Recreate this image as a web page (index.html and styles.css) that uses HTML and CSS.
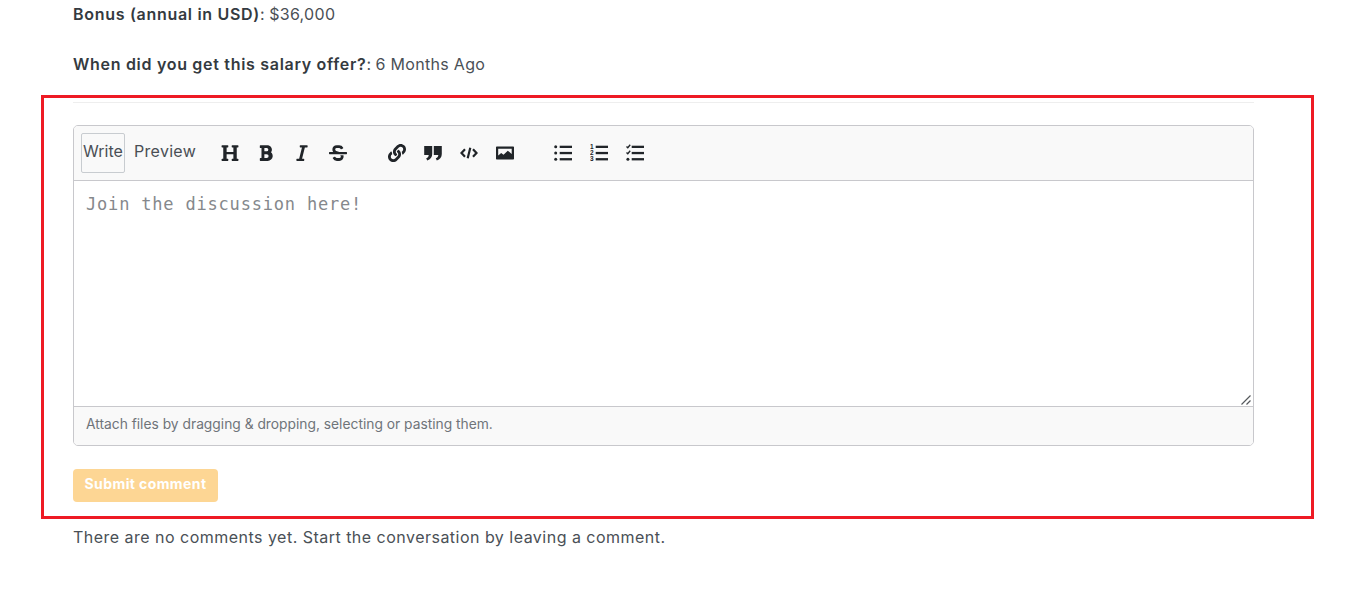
FILE: index.html
```html
<!DOCTYPE html>
<html lang="en">
<head>
<meta charset="utf-8">
<title>Salary offer comments</title>
<link rel="stylesheet" href="styles.css">
</head>
<body>
<main class="page">
  <p class="fact"><strong>Bonus (annual in USD)</strong>: <span class="value">$36,000</span></p>
  <p class="fact"><strong>When did you get this salary offer?</strong>: <span class="value">6 Months Ago</span></p>
  <hr class="rule">
  <form class="comment-form">
    <div class="editor">
      <div class="toolbar">
        <div class="tabs">
          <button type="button" class="tab active">Write</button>
          <button type="button" class="tab">Preview</button>
        </div>
        <div class="tools tools-text">
          <svg class="ico" viewBox="0 0 512 512"><path d="M448 96v320h32a16 16 0 0 1 16 16v32a16 16 0 0 1-16 16H320a16 16 0 0 1-16-16v-32a16 16 0 0 1 16-16h32V288H160v128h32a16 16 0 0 1 16 16v32a16 16 0 0 1-16 16H32a16 16 0 0 1-16-16v-32a16 16 0 0 1 16-16h32V96H32a16 16 0 0 1-16-16V48a16 16 0 0 1 16-16h160a16 16 0 0 1 16 16v32a16 16 0 0 1-16 16h-32v128h192V96h-32a16 16 0 0 1-16-16V48a16 16 0 0 1 16-16h160a16 16 0 0 1 16 16v32a16 16 0 0 1-16 16z"/></svg>
          <svg class="ico" viewBox="0 0 384 512"><path d="M333.49 238a122 122 0 0 0 27-65.21C367.87 96.49 306.55 32 230.41 32H32a16 16 0 0 0-16 16v48a16 16 0 0 0 16 16h31.87v288H32a16 16 0 0 0-16 16v48a16 16 0 0 0 16 16h209.32c70.8 0 134.14-51.75 141-122.4 4.74-48.45-16.39-92.06-48.83-119.6zM145.66 112h64.75a48 48 0 0 1 0 96h-64.75zm64.75 288h-64.75V288h64.75a56 56 0 0 1 0 112z"/></svg>
          <svg class="ico" viewBox="0 0 320 512"><path d="M320 48v32a16 16 0 0 1-16 16h-62.76l-80 320H208a16 16 0 0 1 16 16v32a16 16 0 0 1-16 16H16a16 16 0 0 1-16-16v-32a16 16 0 0 1 16-16h62.76l80-320H112a16 16 0 0 1-16-16V48a16 16 0 0 1 16-16h192a16 16 0 0 1 16 16z"/></svg>
          <svg class="ico" viewBox="0 0 512 512"><path d="M496 224H293.900l-87.170-26.830A43.550 43.550 0 0 1 219.550 112h66.790A49.890 49.890 0 0 1 331 139.580a16 16 0 0 0 21.460 7.150l42.940-21.470a16 16 0 0 0 7.160-21.460l-.53-1A128 128 0 0 0 287.510 32h-68a123.680 123.680 0 0 0-123 135.640c2 20.890 10.100 39.830 21.780 56.360H16a16 16 0 0 0-16 16v32a16 16 0 0 0 16 16h480a16 16 0 0 0 16-16v-32a16 16 0 0 0-16-16zm-180.240 96A43 43 0 0 1 336 356.450 43.590 43.590 0 0 1 292.450 400h-66.790A49.890 49.890 0 0 1 181 372.420a16 16 0 0 0-21.460-7.150l-42.940 21.470a16 16 0 0 0-7.160 21.460l.53 1A128 128 0 0 0 224.490 480h68a123.680 123.680 0 0 0 123-135.640 114.250 114.250 0 0 0-5.340-24.360z"/></svg>
        </div>
        <div class="tools tools-insert">
          <svg class="ico" viewBox="0 0 512 512"><path d="M326.612 185.391c59.747 59.809 58.927 155.698.36 214.590-.11.120-.24.250-.36.370l-67.200 67.200c-59.270 59.270-155.699 59.262-214.960 0-59.270-59.260-59.270-155.700 0-214.960l37.106-37.106c9.840-9.840 26.786-3.300 27.294 10.606.648 17.722 3.826 35.527 9.690 52.721 1.986 5.822.567 12.262-3.783 16.612l-13.087 13.087c-28.026 28.026-28.905 73.660-1.155 101.960 28.024 28.579 74.086 28.749 102.325.510l67.200-67.190c28.191-28.191 28.073-73.757 0-101.830-3.701-3.694-7.429-6.564-10.341-8.569a16.037 16.037 0 0 1-6.947-12.606c-.396-10.567 3.348-21.456 11.698-29.806l21.054-21.055c5.521-5.521 14.182-6.199 20.584-1.731a152.482 152.482 0 0 1 20.522 17.197zM467.547 44.449c-59.261-59.262-155.690-59.270-214.960 0l-67.200 67.200c-.120.120-.250.250-.360.370-58.566 58.892-59.387 154.781.360 214.590a152.454 152.454 0 0 0 20.521 17.196c6.402 4.468 15.064 3.789 20.584-1.731l21.054-21.055c8.350-8.350 12.094-19.239 11.698-29.806a16.037 16.037 0 0 0-6.947-12.606c-2.912-2.005-6.640-4.875-10.341-8.569-28.073-28.073-28.191-73.639 0-101.830l67.200-67.190c28.239-28.239 74.300-28.069 102.325.510 27.750 28.300 26.872 73.934-1.155 101.960l-13.087 13.087c-4.350 4.350-5.769 10.790-3.783 16.612 5.864 17.194 9.042 34.999 9.690 52.721.509 13.906 17.454 20.446 27.294 10.606l37.106-37.106c59.271-59.259 59.271-155.699.001-214.959z"/></svg>
          <svg class="ico" viewBox="0 0 18 18"><path d="M.2 2h8v8c0 3.300-1.800 5.400-5 6.500l-1-2.200c1.700-.7 2.500-1.800 2.500-3.300H.2zM9.800 2h8v8c0 3.300-1.800 5.400-5 6.500l-1-2.200c1.700-.7 2.500-1.800 2.500-3.300H9.800z"/></svg>
          <svg class="ico" viewBox="0 0 18 18"><path class="line line-code" d="M5 5.200 1.500 9 5 12.800M13 5.200 16.500 9 13 12.800M10.300 3.800 7.700 14.200"/></svg>
          <svg class="ico" viewBox="0 0 18 18"><path fill-rule="evenodd" d="M1 2.500h16c.6 0 1 .4 1 1v11c0 .6-.4 1-1 1H1c-.6 0-1-.4-1-1v-11c0-.6.4-1 1-1zM2.200 4.700v6.800l3-2.500 2.300 1.700 4.300-4 3.900 3.200V4.700z"/></svg>
        </div>
        <div class="tools tools-list">
          <svg class="ico" viewBox="0 0 18 18"><circle cx="1.700" cy="2.800" r="1.500"/><circle cx="1.700" cy="9" r="1.500"/><circle cx="1.700" cy="15.200" r="1.500"/><rect x="5.700" y="1.700" width="12.300" height="2.300"/><rect x="5.700" y="7.900" width="12.300" height="2.300"/><rect x="5.700" y="14.100" width="12.300" height="2.300"/></svg>
          <svg class="ico" viewBox="0 0 18 18"><text class="num" x="0" y="4.800">1</text><text class="num" x="0" y="11">2</text><text class="num" x="0" y="17.200">3</text><rect x="5.700" y="1.700" width="12.300" height="2.300"/><rect x="5.700" y="7.900" width="12.300" height="2.300"/><rect x="5.700" y="14.100" width="12.300" height="2.300"/></svg>
          <svg class="ico" viewBox="0 0 18 18"><path class="line line-check" d="M.5 2.400 1.800 3.700 4.200.8M.5 8.400 1.800 9.700 4.200 6.800"/><circle cx="1.900" cy="15.200" r="1.500"/><rect x="5.700" y="1.700" width="12.300" height="2.300"/><rect x="5.700" y="7.900" width="12.300" height="2.300"/><rect x="5.700" y="14.100" width="12.300" height="2.300"/></svg>
        </div>
      </div>
      <div class="input-wrap">
        <textarea class="input" placeholder="Join the discussion here!"></textarea>
        <svg class="grip" viewBox="0 0 10 10"><path d="M.5 9.500 9.500.5M5.500 9.500 9.500 5.500"/></svg>
      </div>
      <div class="attach">Attach files by dragging &amp; dropping, selecting or pasting them.</div>
    </div>
    <button type="button" class="submit">Submit comment</button>
  </form>
  <p class="empty">There are no comments yet. Start the conversation by leaving a comment.</p>
  <div class="highlight"></div>
</main>
</body>
</html>
```

FILE: styles.css
```css
* { box-sizing: border-box; }
html, body { margin: 0; padding: 0; background: #fff; }
body {
  height: 590px;
  overflow: hidden;
  font-family: Inter, "Noto Sans", "Liberation Sans", sans-serif;
  font-size: 16px;
  line-height: 24px;
  color: #4a5056;
}
.page {
  position: relative;
  height: 590px;
  padding: 2px 110px 0 73px;
}
.fact { margin: 0 0 26px; }
.fact strong { font-weight: 600; color: #343a40; letter-spacing: 0.7px; }
.value { letter-spacing: 0.3px; }
.rule {
  height: 1px;
  margin: 0 0 22px;
  border: 0;
  background: #eeeeee;
}
.editor {
  border: 1px solid #c8c8cc;
  border-radius: 5px;
  overflow: hidden;
  display: flex;
  flex-direction: column;
}
.toolbar {
  height: 55px;
  padding: 7px;
  display: flex;
  align-items: flex-start;
  background: #f9f9f9;
  border-bottom: 1px solid #c8c8cc;
}
.tabs { display: flex; width: 140px; flex: none; }
.tab {
  height: 40px;
  padding: 0 8px 4px 8px;
  font: inherit;
  letter-spacing: 0.3px;
  color: #4a4f55;
  background: transparent;
  border: 1px solid transparent;
  border-radius: 2px;
}
.tab.active { width: 44px; flex: none; padding: 0 0 4px; border-color: #c8ccd0; letter-spacing: 0; }
.tools { display: flex; align-items: center; height: 40px; gap: 18px; }
.ico { width: 18px; height: 18px; fill: #212529; flex: none; }
.line { fill: none; stroke: #212529; }
.line-code { stroke-width: 2.200; }
.line-check { stroke-width: 1.400; }
.num { font-family: "Liberation Sans", sans-serif; font-size: 6.500px; font-weight: 700; fill: #212529; }
.tools-insert { margin-left: 41px; }
.tools-list { margin-left: 40px; }
.input-wrap { position: relative; height: 226px; border-bottom: 1px solid #c8c8cc; }
.input {
  display: block;
  width: 100%;
  height: 225px;
  padding: 11px 12px;
  border: 0;
  outline: 0;
  resize: none;
  font-family: "DejaVu Sans Mono", monospace;
  font-size: 17px;
  letter-spacing: 0.810px;
  line-height: 24px;
  background: #fff;
}
.input::placeholder { color: #85888c; opacity: 1; }
.grip {
  position: absolute;
  right: 2px;
  bottom: 1px;
  width: 10px;
  height: 10px;
  fill: none;
  stroke: #55585c;
  stroke-width: 1.200;
}
.attach {
  height: 38px;
  padding: 0 12px 4px;
  display: flex;
  align-items: center;
  font-size: 13.800px;
  color: #6f7479;
  background: #f9f9f9;
}
.submit {
  display: block;
  height: 33px;
  width: 145px;
  margin: 23px 0 0;
  padding: 0 0 4px;
  font: inherit;
  font-size: 14px;
  font-weight: 700;
  letter-spacing: 0.4px;
  color: #fff;
  background: #fdd694;
  border: 0;
  border-radius: 4px;
}
.empty { margin: 23px 0 0; letter-spacing: 0.48px; }
.highlight {
  position: absolute;
  left: 41px;
  top: 95px;
  width: 1273px;
  height: 424px;
  border: 3px solid #ee1a24;
  pointer-events: none;
}
```
